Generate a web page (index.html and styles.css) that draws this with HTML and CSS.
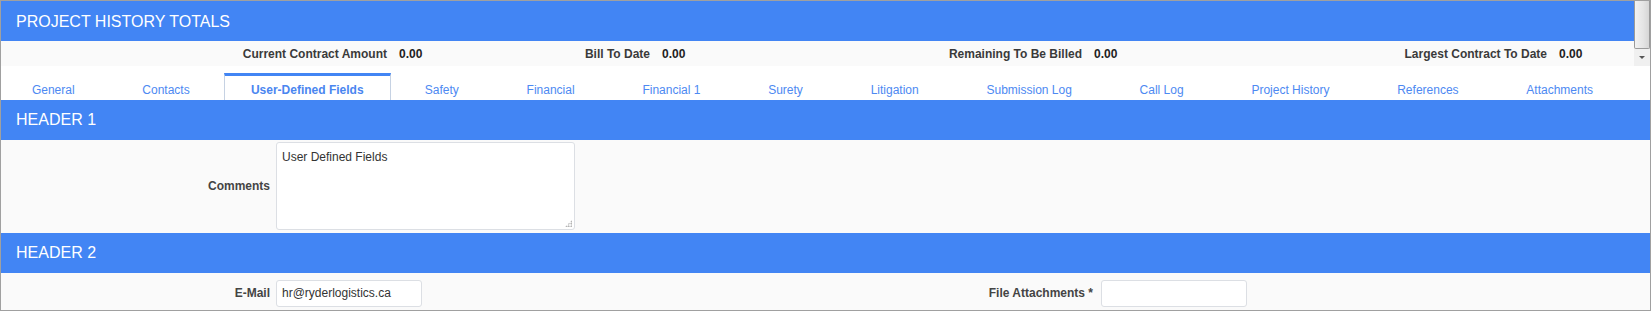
FILE: index.html
```html
<!DOCTYPE html>
<html>
<head>
<meta charset="utf-8">
<link rel="stylesheet" href="styles.css">
</head>
<body>
<div class="frame">
  <div class="top">
    <div class="top-content">
      <div class="title-bar">PROJECT HISTORY TOTALS</div>
      <div class="totals">
        <span class="t-label l1">Current Contract Amount</span><span class="t-value">0.00</span>
        <span class="t-label l2">Bill To Date</span><span class="t-value">0.00</span>
        <span class="t-label l3">Remaining To Be Billed</span><span class="t-value">0.00</span>
        <span class="t-label l4">Largest Contract To Date</span><span class="t-value">0.00</span>
      </div>
    </div>
    <div class="scrollbar">
      <div class="thumb"></div>
      <div class="arrow"><span class="tri"></span></div>
    </div>
  </div>
  <div class="tabs">
    <div class="tab">General</div>
    <div class="tab">Contacts</div>
    <div class="tab active">User-Defined Fields</div>
    <div class="tab">Safety</div>
    <div class="tab">Financial</div>
    <div class="tab">Financial 1</div>
    <div class="tab">Surety</div>
    <div class="tab">Litigation</div>
    <div class="tab">Submission Log</div>
    <div class="tab">Call Log</div>
    <div class="tab">Project History</div>
    <div class="tab">References</div>
    <div class="tab">Attachments</div>
  </div>
  <div class="section-header">HEADER 1</div>
  <div class="row row-comments">
    <div class="half">
      <label class="f-label">Comments</label>
      <div class="textarea">User Defined Fields<span class="grip"></span></div>
    </div>
  </div>
  <div class="section-header">HEADER 2</div>
  <div class="row row-email">
    <div class="half">
      <label class="f-label">E-Mail</label>
      <div class="input">hr@ryderlogistics.ca</div>
    </div>
    <div class="half right">
      <label class="f-label">File Attachments *</label>
      <div class="input"></div>
    </div>
  </div>
</div>
</body>
</html>
```

FILE: styles.css
```css
* { box-sizing: border-box; }
html, body { margin: 0; padding: 0; background: #ffffff; }
body { font-family: "Liberation Sans", Arial, sans-serif; font-size: 12px; color: #333; }

.frame {
  width: 1651px;
  height: 311px;
  border: 1px solid #a0a0a0;
  overflow: hidden;
  background: #fff;
}

.top { display: flex; height: 65px; }
.top-content { width: 1633px; }
.title-bar {
  height: 40px;
  background: #4285f4;
  color: #fff;
  font-size: 16px;
  line-height: 40px;
  padding-left: 15px;
  padding-top: 1px;
}
.totals {
  height: 25px;
  background: #fafafa;
  display: grid;
  grid-template-columns: 386px 50px 189px 50px 358px 50px 391px 50px;
  column-gap: 12px;
  align-items: center;
  font-weight: bold;
  color: #333;
}
.t-label { text-align: right; color: #3a3a3a; }
.t-value { color: #222; }

.scrollbar { width: 16px; height: 65px; display: flex; flex-direction: column; background: #f7f7f7; }
.thumb {
  height: 48px;
  border: 1px solid #9a9a9a;
  border-top: none;
  border-radius: 0 0 2px 2px;
  background: linear-gradient(to right, #f2f2f2, #e4e4e4 60%, #d6d6d6);
}
.arrow { flex: 1; display: flex; align-items: center; justify-content: center; background: #f0f0f0; }
.tri { width: 0; height: 0; border-left: 3px solid transparent; border-right: 3px solid transparent; border-top: 3px solid #555; }

.tabs {
  display: flex;
  height: 34px;
  padding-top: 7px;
  width: 1626px;
  background: #fff;
}
.tab {
  flex: 1 1 auto;
  text-align: center;
  color: #4d89f2;
  border-top: 3px solid transparent;
  border-left: 1px solid transparent;
  border-right: 1px solid transparent;
  padding-top: 7px;
  line-height: 14px;
  white-space: nowrap;
}
.tab:first-child { margin-left: -3px; }
.tab.active {
  border-top-color: #4285f4;
  border-left-color: #c6d2e3;
  border-right-color: #c6d2e3;
  font-weight: bold;
  color: #4a86f0;
  flex-grow: 0.8;
}

.section-header {
  height: 40px;
  background: #4285f4;
  color: #fff;
  font-size: 16px;
  line-height: 40px;
  padding-left: 15px;
}

.row { display: flex; background: #fafafa; }
.row-comments { height: 93px; padding-top: 2px; }
.row-email { height: 37px; padding-top: 3px; }
.half { display: flex; align-items: center; width: 816px; gap: 6px; }
.half.right { gap: 8px; }
.f-label { width: 269px; text-align: right; font-weight: bold; color: #444; }
.half.right .f-label { width: 276px; }
.row-comments .half { align-items: center; height: 88px; }

.textarea {
  position: relative;
  width: 299px;
  height: 88px;
  background: #fff;
  border: 1px solid #dcdfe4;
  border-radius: 3px;
  padding: 7px 5px;
  line-height: 14px;
  color: #333;
}
.grip {
  position: absolute;
  right: 2px;
  bottom: 2px;
  width: 7px;
  height: 7px;
  background:
    radial-gradient(circle, #999 0.7px, transparent 1px) 0 0 / 2.5px 2.5px;
  clip-path: polygon(100% 0, 100% 100%, 0 100%);
}
.input {
  width: 146px;
  height: 27px;
  background: #fff;
  border: 1px solid #dcdfe4;
  border-radius: 3px;
  padding: 0 5px;
  line-height: 25px;
  color: #333;
}
```
